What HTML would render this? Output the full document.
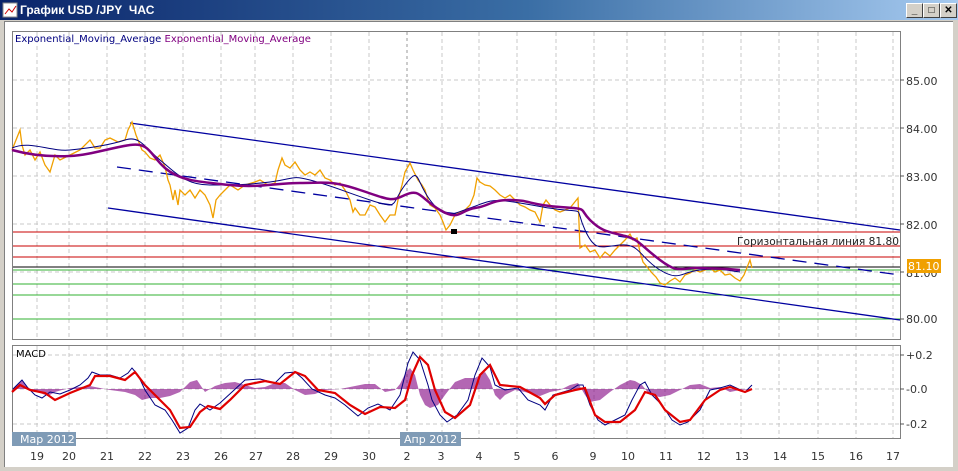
<!DOCTYPE html>
<html><head><meta charset="utf-8"><style>
body{margin:0;width:958px;height:471px;overflow:hidden;background:#d4d0c8;font-family:"DejaVu Sans","Liberation Sans",sans-serif;}
#t{position:absolute;left:0;top:0;width:958px;height:20px;background:linear-gradient(90deg,#0a246a,#3a6ea5 55%,#a6caf0);}
#t span{position:absolute;left:20px;top:3px;color:#fff;font:bold 12px "Liberation Sans",sans-serif;}
.b{position:absolute;top:3px;width:15px;height:13px;background:#d4d0c8;border:1px solid;border-color:#fff #404040 #404040 #fff;font:bold 10px "Liberation Sans";text-align:center;line-height:13px;color:#000}
#w{position:absolute;left:4px;top:21px;width:948px;height:445px;background:#fff;border-top:1px solid #808080;border-left:1px solid #808080}
svg{position:absolute;left:0;top:0}
</style></head><body>
<div id="t"><svg width="18" height="18" style="left:2px;top:1px"><rect x="1" y="2" width="14" height="14" fill="#fff" stroke="#888"/><path d="M3 13 L7 8 L10 11 L14 5" stroke="#c00" fill="none"/></svg><span>График USD /JPY&nbsp; ЧАС</span>
<div class="b" style="left:906px">_</div><div class="b" style="left:923px">□</div><div class="b" style="left:940px">✕</div></div>
<div id="w"></div>
<svg width="958" height="471" font-size="11" font-family="DejaVu Sans, sans-serif">
<g stroke="#c8c8c8" stroke-dasharray="4,3" stroke-width="1" shape-rendering="crispEdges">
<path d="M37 32V339M69 32V339M107 32V339M145 32V339M183 32V339M221 32V339M255 32V339M293 32V339M331 32V339M369 32V339M442 32V339M479 32V339M517 32V339M556 32V339M594 32V339M627 32V339M665 32V339M703 32V339M741 32V339M779 32V339M818 32V339M856 32V339M893 32V339"/>
<path d="M37 346V438M69 346V438M107 346V438M145 346V438M183 346V438M221 346V438M255 346V438M293 346V438M331 346V438M369 346V438M442 346V438M479 346V438M517 346V438M556 346V438M594 346V438M627 346V438M665 346V438M703 346V438M741 346V438M779 346V438M818 346V438M856 346V438M893 346V438"/>
<path d="M13 80H900M13 128H900M13 176H900M13 224H900M13 272H900M13 355H900M13 389H900M13 424H900"/>
</g>
<path d="M407 32V445" stroke="#999" stroke-dasharray="3,3" shape-rendering="crispEdges"/>
<rect x="12.5" y="31.5" width="888" height="308" fill="none" stroke="#808080"/>
<rect x="12.5" y="345.5" width="888" height="93" fill="none" stroke="#808080"/>
<g stroke="#555" shape-rendering="crispEdges"><path d="M900 80h4M900 128h4M900 176h4M900 224h4M900 272h4M900 319h4M900 355h4M900 389h4M900 424h4"/></g>
<g fill="#333"><text x="906" y="85">85.00</text><text x="906" y="133">84.00</text><text x="906" y="181">83.00</text><text x="906" y="229">82.00</text><text x="906" y="277">81.00</text><text x="906" y="323">80.00</text>
<text x="906" y="359">+0.2</text><text x="906" y="393">-0.0</text><text x="906" y="428">-0.2</text></g>
<text x="15" y="42" fill="#000080" font-size="10">Exponential_Moving_Average <tspan fill="#800080">Exponential_Moving_Average</tspan></text>
<g stroke-width="1" shape-rendering="crispEdges"><path d="M13 232H900M13 246H900M13 257H900" stroke="#c80000"/><path d="M13 267H900" stroke="#000"/><path d="M13 270H900M13 284H900M13 295H900M13 319H900" stroke="#30b030"/></g>
<path d="M130 123L900 230M108 208L900 320" stroke="#0000a0" stroke-width="1.3" fill="none"/>
<path d="M117 167L900 275" stroke="#0000a0" stroke-width="1.3" stroke-dasharray="14,8" fill="none"/>
<text x="737" y="245" fill="#222" font-size="10.6" textLength="162">Горизонтальная линия 81.80</text>
<path d="M12 150L16 140 20 130 22 145 25 155 30 150 35 160 40 152 45 165 50 172 55 155 60 160 70 155 80 150 90 140 95 148 100 148 105 140 110 138 118 142 125 140 128 130 132 122 136 135 138 140 142 150 145 152 150 158 155 160 160 155 165 167 168 180 170 185 173 200 175 190 178 205 180 190 185 195 190 190 195 198 200 190 205 195 210 205 213 218 216 200 220 195 225 190 230 185 238 190 245 185 255 182 260 180 268 185 275 183 278 170 282 158 285 165 290 168 295 162 300 170 305 175 310 172 315 175 320 170 325 178 330 180 335 185 340 183 345 190 350 200 353 212 355 208 360 215 365 215 370 205 375 207 380 215 385 222 390 215 395 215 398 200 402 185 405 172 410 163 413 170 418 180 422 185 425 190 428 200 430 205 435 208 440 215 443 222 446 230 450 225 455 215 460 212 465 210 470 205 474 195 477 178 480 182 485 185 490 186 495 190 500 195 505 198 510 195 515 200 520 205 525 207 530 210 535 212 540 222 543 205 546 200 550 205 555 210 560 212 565 210 570 208 578 198 580 248 585 245 590 252 595 250 600 258 605 252 610 256 615 250 620 245 625 240 630 234 633 240 637 238 640 252 643 262 648 268 652 273 656 277 660 283 665 285 670 281 675 278 680 282 685 275 690 273 695 270 700 272 705 270 710 268 715 272 720 270 725 275 730 274 735 278 740 281 744 275 748 265 750 260 752 268" fill="none" stroke="#f0a000" stroke-width="1.3"/>
<path d="M12 148C30 140 50 152 70 150S110 145 125 140 145 148 160 160 185 185 210 185 245 185 270 182 290 175 310 180 340 190 370 200 390 205 405 185 415 180 430 200 450 215 470 208 490 198 520 203 545 208 565 210 575 208 585 230 600 247 620 245 640 258 660 270 680 272 700 270 725 270 740 272 752 270" fill="none" stroke="#000080" stroke-width="1"/>
<path d="M12 150C30 155 50 157 70 156S110 148 130 145 150 155 165 168 200 182 230 185 275 183 300 183 330 180 360 190 390 202 405 195 420 198 440 210 460 210 475 208 490 200 510 200 530 205 560 207 578 208 590 220 610 232 625 236 640 245 660 260 680 267 700 268 720 268 740 270 752 270" fill="none" stroke="#800080" stroke-width="2.5"/>
<rect x="907" y="259" width="34" height="14" fill="#f0a000"/><text x="908" y="270" fill="#fff">81.10</text>
<rect x="451" y="229" width="6" height="5" fill="#000"/>
<text x="16" y="357" fill="#000" font-size="10">MACD</text>
<path d="M13 389L18 384 22 380 26 386 32 390 40 393 48 396 55 392 62 390 70 388 80 387 90 386 100 388 110 390 125 392 135 395 142 400 150 398 160 398 170 396 180 392 190 382 197 380 205 392 215 386 225 383 235 382 245 385 255 388 265 387 275 383 285 383 295 390 305 395 315 394 325 390 340 389 355 386 365 384 375 384 385 392 395 390 400 384 406 372 410 368 415 375 420 395 425 405 430 408 438 405 445 395 455 382 465 378 475 378 485 372 490 380 495 395 500 400 505 395 515 390 525 392 535 395 540 396 550 392 560 390 570 385 578 383 585 395 590 402 600 400 610 392 620 385 630 380 635 381 642 385 650 395 660 397 670 395 680 390 690 385 700 384 710 388 720 387 730 392 740 390 752 389 752 389Z" fill="#800080" fill-opacity="0.6"/>
<path d="M13 389L18 384 22 380 28 388 35 395 42 398 50 392 60 394 70 390 80 385 88 378 92 372 100 375 110 375 120 378 128 373 132 368 138 375 145 390 155 405 165 410 172 420 180 433 188 428 195 410 200 404 210 410 220 403 232 392 245 380 260 379 275 383 285 373 295 372 302 378 312 389 325 395 335 398 345 405 358 416 368 408 378 404 390 410 400 395 408 363 413 352 420 360 428 385 432 400 440 415 447 422 457 415 468 400 475 375 482 358 490 367 495 385 505 390 518 388 528 400 540 405 545 410 553 395 570 390 578 385 583 385 590 405 598 420 605 425 615 420 625 415 632 400 640 385 645 382 652 395 662 405 672 420 680 425 688 422 700 410 710 390 720 388 730 385 745 392 752 385" fill="none" stroke="#000080" stroke-width="1"/>
<path d="M12 392L20 385 30 390 45 393 55 400 70 393 90 385 95 376 110 376 125 380 135 372 145 385 160 400 170 410 180 428 190 427 200 412 208 406 220 409 230 400 245 385 265 381 280 384 295 372 305 376 318 390 335 393 350 405 365 414 380 407 395 408 405 400 412 375 420 357 428 365 435 390 445 412 455 418 470 405 480 375 490 365 500 385 520 387 540 398 545 404 555 395 575 390 585 388 595 415 605 422 620 422 635 410 645 392 655 395 665 410 680 422 690 420 705 400 720 390 730 387 745 392 752 389" fill="none" stroke="#e00000" stroke-width="2.2"/>
<rect x="12" y="432" width="64" height="14" fill="#7f9bb6"/><text x="20" y="443" fill="#fff">Мар 2012</text>
<rect x="400" y="432" width="61" height="14" fill="#7f9bb6"/><text x="404" y="443" fill="#fff">Апр 2012</text>
<g fill="#333" text-anchor="middle"><text x="37" y="460">19</text><text x="69" y="460">20</text><text x="107" y="460">21</text><text x="145" y="460">22</text><text x="183" y="460">23</text><text x="221" y="460">26</text><text x="256" y="460">27</text><text x="293" y="460">28</text><text x="331" y="460">29</text><text x="369" y="460">30</text><text x="407" y="460">2</text><text x="441" y="460">3</text><text x="479" y="460">4</text><text x="517" y="460">5</text><text x="555" y="460">6</text><text x="593" y="460">9</text><text x="628" y="460">10</text><text x="666" y="460">11</text><text x="704" y="460">12</text><text x="742" y="460">13</text><text x="780" y="460">14</text><text x="818" y="460">15</text><text x="856" y="460">16</text><text x="893" y="460">17</text></g>
</svg>
</body></html>
